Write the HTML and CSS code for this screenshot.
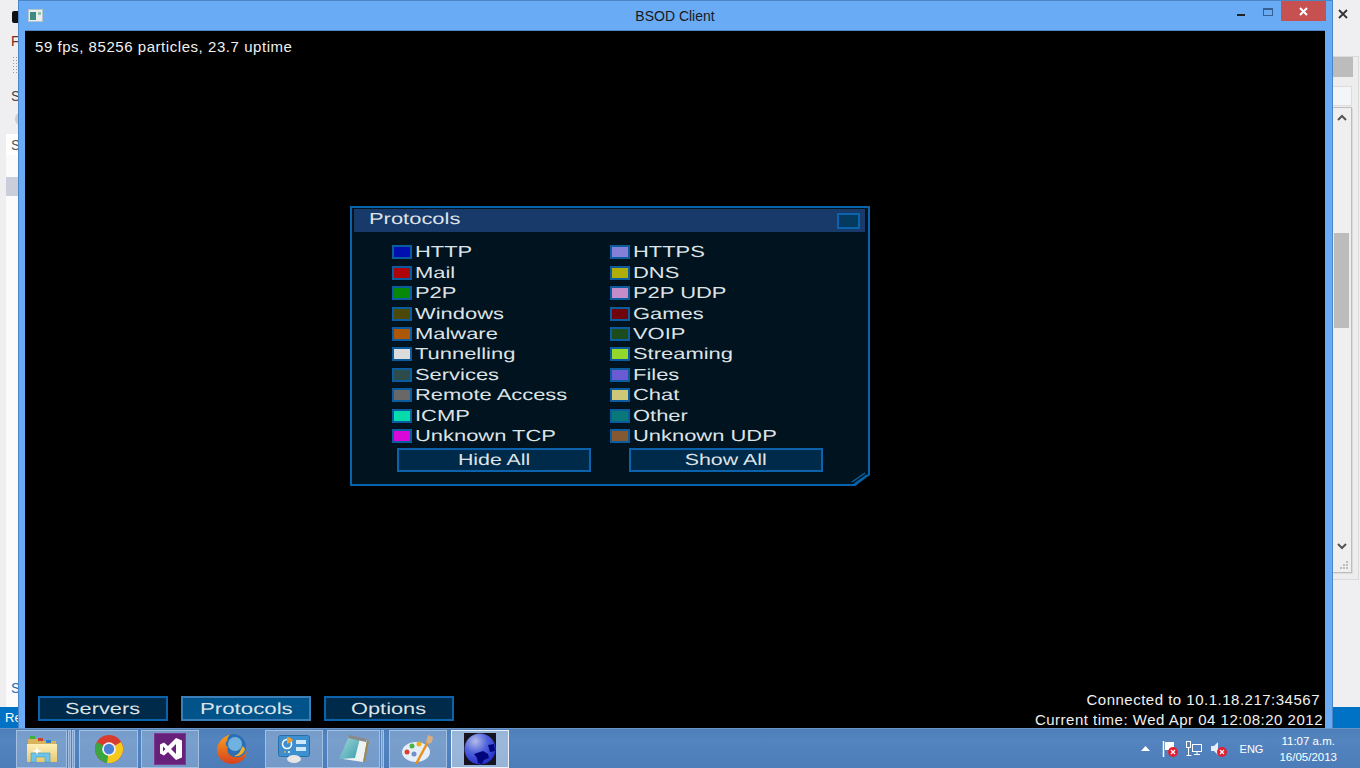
FILE: index.html
```html
<!DOCTYPE html>
<html lang="en">
<head>
<meta charset="utf-8">
<title>BSOD Client</title>
<link rel="stylesheet" href="styles.css">
</head>
<body>
<div class="desktop">
  <div class="backwin">
    <div class="bg-list"></div>
    <div class="bg-bold"></div>
    <span class="bg-frag f1">F</span>
    <div class="bg-dots"></div>
    <span class="bg-frag f2">S</span>
    <div class="bg-round"></div>
    <div class="bg-input"><span>S</span></div>
    <div class="bg-sel"></div>
    <span class="bg-frag f3">S</span>
    <div class="bg-status">Re</div>
    <svg class="bg-close" width="12" height="12" viewBox="0 0 12 12"><path d="M2 2l8 8M10 2l-8 8" stroke="#333" stroke-width="1.8"/></svg>
    <div class="bg-side"></div>
    <div class="bg-tab"></div>
    <div class="bg-field"></div>
    <div class="bg-scroll">
      <svg class="sc-up" width="10" height="8" viewBox="0 0 10 8"><path d="M1 6l4-4 4 4" fill="none" stroke="#555" stroke-width="2"/></svg>
      <div class="sc-thumb"></div>
      <svg class="sc-down" width="10" height="8" viewBox="0 0 10 8"><path d="M1 2l4 4 4-4" fill="none" stroke="#555" stroke-width="2"/></svg>
      <svg class="sc-grip" width="9" height="9" viewBox="0 0 9 9"><path d="M6 0h2v2H6zM3 3h2v2H3zM6 3h2v2H6zM0 6h2v2H0zM3 6h2v2H3zM6 6h2v2H6z" fill="#bbb"/></svg>
    </div>
  </div>

  <div class="window">
    <div class="titlebar">
      <svg class="appicon" width="15" height="13" viewBox="0 0 15 13"><rect x=".5" y=".5" width="14" height="12" fill="#e8eef0" stroke="#b8c4cc"/><rect x="2" y="3" width="6" height="8" fill="#3f8a80"/><rect x="10" y="3" width="3" height="3" fill="#8fc7a8"/></svg>
      <span class="title">BSOD Client</span>
      <div class="caption">
        <span class="cap-min"></span>
        <span class="cap-max"></span>
        <span class="cap-close"><svg width="9" height="9" viewBox="0 0 9 9"><path d="M1 1l7 7M8 1L1 8" stroke="#fff" stroke-width="2"/></svg></span>
      </div>
    </div>
    <div class="viewport">
      <div class="fps">59 fps, 85256 particles, 23.7 uptime</div>

      <div class="panel">
        <div class="panel-head">
          <span class="wide panel-title">Protocols</span>
          <span class="panel-toggle"></span>
        </div>
        <div class="proto-grid">
          <div class="proto"><i class="sw" style="background:#0010b0"></i><span class="wide">HTTP</span></div>
          <div class="proto"><i class="sw" style="background:#8480d8"></i><span class="wide">HTTPS</span></div>
          <div class="proto"><i class="sw" style="background:#ac0408"></i><span class="wide">Mail</span></div>
          <div class="proto"><i class="sw" style="background:#b0ac08"></i><span class="wide">DNS</span></div>
          <div class="proto"><i class="sw" style="background:#088808"></i><span class="wide">P2P</span></div>
          <div class="proto"><i class="sw" style="background:#c48cc8"></i><span class="wide">P2P UDP</span></div>
          <div class="proto"><i class="sw" style="background:#4c4808"></i><span class="wide">Windows</span></div>
          <div class="proto"><i class="sw" style="background:#70040c"></i><span class="wide">Games</span></div>
          <div class="proto"><i class="sw" style="background:#ac5808"></i><span class="wide">Malware</span></div>
          <div class="proto"><i class="sw" style="background:#1c4c1c"></i><span class="wide">VOIP</span></div>
          <div class="proto"><i class="sw" style="background:#dcdcdc"></i><span class="wide">Tunnelling</span></div>
          <div class="proto"><i class="sw" style="background:#94d82c"></i><span class="wide">Streaming</span></div>
          <div class="proto"><i class="sw" style="background:#2c4c4c"></i><span class="wide">Services</span></div>
          <div class="proto"><i class="sw" style="background:#6a5ad4"></i><span class="wide">Files</span></div>
          <div class="proto"><i class="sw" style="background:#686868"></i><span class="wide">Remote Access</span></div>
          <div class="proto"><i class="sw" style="background:#ccc878"></i><span class="wide">Chat</span></div>
          <div class="proto"><i class="sw" style="background:#04dcac"></i><span class="wide">ICMP</span></div>
          <div class="proto"><i class="sw" style="background:#087878"></i><span class="wide">Other</span></div>
          <div class="proto"><i class="sw" style="background:#d808d8"></i><span class="wide">Unknown TCP</span></div>
          <div class="proto"><i class="sw" style="background:#845830"></i><span class="wide">Unknown UDP</span></div>
        </div>
        <div class="panel-actions">
          <div class="gl-btn"><span class="wide">Hide All</span></div>
          <div class="gl-btn"><span class="wide">Show All</span></div>
        </div>
        <svg class="grip" width="20" height="16" viewBox="0 0 20 16"><path d="M20 5L5 16H20Z" fill="#000"/><path d="M19 4.500L5 15" fill="none" stroke="#0764ab" stroke-width="1.600"/><path d="M2 12L15 3M4 14L17 5" fill="none" stroke="#0764ab" stroke-width="1.400"/></svg>
      </div>

      <div class="bottom">
        <div class="nav">
          <div class="nav-btn"><span class="wide">Servers</span></div>
          <div class="nav-btn active"><span class="wide">Protocols</span></div>
          <div class="nav-btn"><span class="wide">Options</span></div>
        </div>
        <div class="status">
          <div>Connected to 10.1.18.217:34567</div>
          <div>Current time: Wed Apr 04 12:08:20 2012</div>
        </div>
      </div>
    </div>
  </div>

  <div class="taskbar">
    <div class="tb-items">
      <div class="tb-btn w51"><svg width="32" height="28" viewBox="0 0 32 28"><defs><linearGradient id="fo" x1="0" y1="0" x2="0" y2="1"><stop offset="0" stop-color="#fdf0b8"/><stop offset="1" stop-color="#e8c670"/></linearGradient></defs><path d="M2 4h12l2 2h14v20H2z" fill="#d8b45c"/><rect x="4" y="1" width="5" height="3" fill="#3cb043"/><rect x="12" y="3" width="5" height="3" fill="#d04030"/><rect x="20" y="5" width="5" height="3" fill="#3080d0"/><path d="M1 9h30v18H1z" fill="url(#fo)"/><path d="M5 18h19v9h-5v-5H10v5H5z" fill="#6cc4e8" stroke="#3d9cc8" stroke-width=".6"/><path d="M11 11l1 4 4 1-4 1-1 3-1-3-4-1 4-1z" fill="#fff"/></svg></div>
      <div class="tb-sliver"></div>
      <div class="tb-sliver"></div>
      <div class="tb-btn w59 ml4"><svg width="28" height="28" viewBox="0 0 28 28"><circle cx="14" cy="14" r="14" fill="#d93b2f"/><path d="M14 14L2 7A14 14 0 0 0 12 27.900Z" fill="#3ba53f"/><path d="M14 14L26 7A14 14 0 0 1 12 27.900Z" fill="#f6c91d"/><circle cx="14" cy="14" r="6.800" fill="#f4f4f4"/><circle cx="14" cy="14" r="5.200" fill="#4a80d6"/></svg></div>
      <div class="tb-btn w58 ml3"><svg width="32" height="32" viewBox="0 0 32 32"><rect width="32" height="32" fill="#68217a"/><rect x=".5" y=".5" width="31" height="31" fill="none" stroke="#7d3a90"/><path d="M22 5l6 2.500v17L22 27l-8-8-4 3.500-4-2V11.500l4-2 4 3.500zM22 11l-5 5 5 5zM9 13.500v5l2.500-2.500z" fill="#fff" fill-rule="evenodd"/></svg></div>
      <div class="tb-plain"><svg width="32" height="32" viewBox="0 0 32 32"><defs><linearGradient id="ff" x1="0" y1="0" x2="0" y2="1"><stop offset="0" stop-color="#f6a21e"/><stop offset="1" stop-color="#d8401c"/></linearGradient></defs><circle cx="17" cy="14" r="13" fill="#2a6fb5"/><circle cx="19" cy="11" r="7" fill="#6fb2e0"/><path d="M15 1C8 3 1 9 1 17c0 8 7 14 15 14 8 0 14-5 15-13-3 5-8 7-13 6-5-1-8-6-6-10-3-1-3-5 0-7-2 0 1-5 3-6z" fill="url(#ff)"/><path d="M29 16c-1 5-6 8-11 7 3-1 6-3 7-7l2-3z" fill="#f2b02a"/></svg></div>
      <div class="tb-btn w58"><svg width="32" height="28" viewBox="0 0 32 28"><rect x=".5" y=".5" width="31" height="21" rx="2" fill="#3d8fd0" stroke="#2a6ea8"/><circle cx="9" cy="9" r="4.500" fill="none" stroke="#fff" stroke-width="1.500"/><path d="M9 9V2a7 7 0 0 1 6 4z" fill="#f0a030"/><rect x="18" y="5" width="10" height="4" fill="#cfe8f8"/><rect x="18" y="12" width="10" height="4" fill="#cfe8f8"/><circle cx="7" cy="17" r="1" fill="#f0a030"/><circle cx="11" cy="17" r="1" fill="#fff"/><ellipse cx="16" cy="24" rx="7" ry="4" fill="#e6e6e6"/></svg></div>
      <div class="tb-btn w53 ml4"><svg width="32" height="30" viewBox="0 0 32 30"><defs><linearGradient id="np" x1="0" y1="0" x2="1" y2="1"><stop offset="0" stop-color="#a8dcd8"/><stop offset="1" stop-color="#3a9cb0"/></linearGradient></defs><path d="M11 2l18 4-4 22-20-3z" fill="#eef2f2"/><path d="M29 6l2 1-4 21-2 0z" fill="#a08a50"/><path d="M11 2L1 25l16-1 5-20z" fill="url(#np)"/><path d="M11 1l18 4-1 3-18-4z" fill="#8a8a8a"/></svg></div>
      <div class="tb-sliver"></div>
      <div class="tb-btn w58 ml5"><svg width="32" height="30" viewBox="0 0 32 30"><ellipse cx="14" cy="18" rx="14" ry="10" fill="#e6eef8"/><circle cx="5" cy="18" r="2.500" fill="#d84030"/><circle cx="10" cy="12" r="2.500" fill="#50b048"/><circle cx="17" cy="10" r="2.500" fill="#f0b020"/><circle cx="12" cy="20" r="2.500" fill="#7090c8"/><path d="M27 6L14 30" stroke="#e89020" stroke-width="2.500"/><path d="M24 8l2-7 5 2-1 5-3 2z" fill="#d8b080"/></svg></div>
      <div class="tb-btn w58 ml4 current"><div class="globe-bg"><svg width="32" height="32" viewBox="0 0 32 32"><defs><radialGradient id="gl" cx=".35" cy=".25" r=".85"><stop offset="0" stop-color="#b4bce8"/><stop offset=".45" stop-color="#4f62dc"/><stop offset="1" stop-color="#1a26c8"/></radialGradient></defs><circle cx="16" cy="16" r="15.500" fill="url(#gl)"/><path d="M10 21l9-3 5 3 1 4-5 2-2 4-4-1-1-5zM24 12l6-1 1 7-5 1z" fill="#00067a"/></svg></div></div>
    </div>
    <div class="tray">
      <svg class="tray-up" width="9" height="5" viewBox="0 0 9 5"><path d="M0 5L4.500 0 9 5z" fill="#fff"/></svg>
      <svg class="tray-flag" width="16" height="16" viewBox="0 0 16 16"><path d="M1.500 0v16" stroke="#fff" stroke-width="1.500"/><path d="M3 1h9v8H3z" fill="#fff"/><circle cx="11" cy="11" r="5" fill="#e02030"/><path d="M9 9l4 4M13 9l-4 4" stroke="#fff" stroke-width="1.200"/></svg>
      <svg class="tray-net" width="16" height="16" viewBox="0 0 16 16"><rect x="6.500" y="3.500" width="9" height="7" fill="none" stroke="#fff"/><rect x=".500" y=".500" width="4" height="6" fill="none" stroke="#fff"/><path d="M2.500 7v8M.500 14.500h5M8 13.500h6M11 11v2" stroke="#fff"/></svg>
      <svg class="tray-vol" width="16" height="16" viewBox="0 0 16 16"><path d="M0 5h3l4-4v13l-4-4H0z" fill="#e8eef8"/><circle cx="11" cy="11" r="5" fill="#e02030"/><path d="M9 9l4 4M13 9l-4 4" stroke="#fff" stroke-width="1.200"/></svg>
      <span class="lang">ENG</span>
      <div class="clock"><div>11:07 a.m.</div><div>16/05/2013</div></div>
    </div>
  </div>
</div>
</body>
</html>
```

FILE: styles.css
```css
* { box-sizing: border-box; }
html, body { margin: 0; height: 100%; overflow: hidden; }
.desktop {
  position: relative;
  width: 1360px;
  height: 768px;
  background: #efeff1;
  font-family: "Liberation Sans", Arial, sans-serif;
  overflow: hidden;
}

/* window lying behind the client */
.backwin { position: absolute; inset: 0 0 40px 0; background: #efeff2; }
.bg-list { position: absolute; left: 6px; top: 155px; width: 1300px; bottom: 21px; background: #fbfbfb; }
.bg-frag { position: absolute; left: 11px; font-size: 14px; line-height: 16px; color: #444; }
.f1 { top: 33px; color: #7a2a20; }
.f2 { top: 88px; }
.f3 { top: 680px; color: #1b6fb8; }
.bg-bold { position: absolute; left: 12px; top: 11px; width: 6px; height: 12px; background: #111; border-radius: 2px 0 0 2px; }
.bg-dots { position: absolute; left: 12px; top: 56px; width: 6px; height: 17px; background: radial-gradient(#999 35%, transparent 40%) 0 0 / 3px 3px; }
.bg-round { position: absolute; left: 15px; top: 113px; width: 10px; height: 12px; border-radius: 50%; background: #ccc; }
.bg-input { position: absolute; left: 6px; top: 134px; width: 1300px; height: 21px; background: #fff; font-size: 14px; line-height: 16px; color: #555; padding: 3px 0 0 5px; }
.bg-sel { position: absolute; left: 6px; top: 177px; width: 1300px; height: 19px; background: #cacdda; }
.bg-status { position: absolute; left: 0; top: 707px; width: 100%; height: 21px; background: #0072c6; color: #fff; font-size: 13px; line-height: 16px; padding: 3px 0 0 5px; }
.bg-close { position: absolute; left: 1337px; top: 8px; }
.bg-side { position: absolute; left: 1200px; top: 56px; width: 159px; height: 524px; background: #ededed; border: 1px solid #dadada; }
.bg-tab { position: absolute; left: 1333px; top: 57px; width: 20px; height: 20px; background: #bcbcbc; }
.bg-field { position: absolute; left: 1333px; top: 86px; width: 19px; height: 20px; background: #f4f5f8; border: 1px solid #dcdcdc; border-left: 0; }
.bg-scroll { position: absolute; left: 1333px; top: 107px; width: 19px; height: 466px; background: #efefef; border: 1px solid #bdbdbd; border-left: 0; box-shadow: 1px 1px 0 #dcdcdc; }
.sc-up { position: absolute; left: 4px; top: 6px; }
.sc-thumb { position: absolute; left: 1px; top: 125px; width: 15px; height: 95px; background: #bcbcbc; }
.sc-down { position: absolute; left: 4px; top: 434px; }
.sc-grip { position: absolute; right: 2px; bottom: 2px; }

/* the client window */
.window {
  position: absolute;
  left: 18px;
  top: 0;
  width: 1315px;
  height: 728px;
  background: #69abf5;
  border: 1px solid #4c86c6;
  border-bottom: 0;
  display: flex;
  flex-direction: column;
  padding: 0 7px 0 6px;
}
.titlebar { height: 29px; display: flex; align-items: center; position: relative; flex: none; }
.appicon { margin: 0 0 0 3px; }
.title { position: absolute; left: 0; right: 0; top: 7px; text-align: center; font-size: 14px; line-height: 16px; color: #1a1a1a; }
.caption { position: absolute; right: 0; top: 0; display: flex; align-items: flex-start; }
.cap-min { width: 8px; height: 2px; background: #222; margin: 13px 18px 0 0; }
.cap-max { width: 10px; height: 8px; border: 1px solid #35608f; border-top-width: 2px; margin: 7px 8px 0 0; }
.cap-close { width: 45px; height: 20px; margin-top: 0; background: #c75050; display: flex; align-items: center; justify-content: center; margin-right: -1px; }

.viewport {
  flex: 1;
  min-height: 0;
  background: #000;
  display: flex;
  flex-direction: column;
  justify-content: space-between;
  position: relative;
  border-top: 1px solid #4c86c6;
}
.fps { color: #f0f0f0; font-size: 15px; line-height: 18px; padding: 7px 0 0 10px; letter-spacing: .55px; }

/* stretched GUI font */
.wide {
  display: inline-block;
  font-size: 16px;
  line-height: 20px;
  padding-top: 2px;
  white-space: nowrap;
  color: #dfe3e6;
  text-rendering: geometricPrecision;
  transform: scaleX(1.37);
  transform-origin: left center;
}

.panel {
  position: absolute;
  left: 325px;
  top: 175px;
  width: 520px;
  height: 280px;
  background: #00131f;
  border: 2px solid #0764ab;
  padding: 1px 3px 1px 2px;
}
.panel-head { height: 23px; background: #173a6b; display: flex; align-items: center; justify-content: space-between; padding: 0 5px 0 15px; }
.panel-title { line-height: 18px; margin-bottom: 4px; }
.panel-toggle { width: 23px; height: 16px; background: #033a5e; border: 2px solid #0b63ad; }
.proto-grid {
  display: grid;
  grid-template-columns: 218px 218px;
  grid-auto-rows: 20.45px;
  margin: 10px 0 0 38px;
}
.proto { display: flex; align-items: center; gap: 3px; }
.sw { display: block; flex: none; width: 20px; height: 14px; border: 2px solid #0b5c9e; }
.panel-actions { display: flex; gap: 38px; margin: 2px 0 0 43px; }
.gl-btn {
  width: 194px;
  height: 24px;
  background: #002a4a;
  border: 2px solid #0b63ad;
  display: flex;
  align-items: center;
  justify-content: center;
}
.gl-btn .wide { transform-origin: center; transform: scaleX(1.335); }
.grip { position: absolute; right: -2px; bottom: -2px; }

.bottom { display: flex; justify-content: space-between; align-items: flex-end; }
.nav { display: flex; gap: 13px; margin: 0 0 7px 13px; }
.nav-btn {
  width: 130px;
  height: 25px;
  background: #002a4a;
  border: 2px solid #0b63ad;
  display: flex;
  align-items: center;
  justify-content: center;
}
.nav-btn .wide { transform-origin: center; transform: scaleX(1.36); }
.nav-btn.active { background: #02538a; border-color: #3a7fb8; }
.nav-btn.active .wide { transform: scaleX(1.39); }
.status { color: #f0f0f0; font-size: 15px; line-height: 20px; text-align: right; letter-spacing: .5px; padding: 0 2px 0 0; margin-bottom: -2px; }
.status div:first-child { padding-right: 3px; }

/* taskbar */
.taskbar {
  position: absolute;
  left: 0;
  right: 0;
  bottom: 0;
  height: 40px;
  background: linear-gradient(#4f7fb8, #5484bf 30%, #4c7db9);
  display: flex;
  justify-content: space-between;
  border-top: 1px solid #6a94c6;
}
.tb-items { display: flex; align-items: center; padding-left: 16px; }
.tb-btn, .tb-sliver {
  height: 38px;
  border: 1px solid rgba(200, 220, 245, .55);
  background: rgba(255, 255, 255, .22);
  display: flex;
  align-items: center;
  justify-content: center;
  flex: none;
}
.tb-sliver { width: 3px; margin-left: 1px; }
.w51 { width: 51px; }
.w53 { width: 53px; }
.w58 { width: 58px; }
.w59 { width: 59px; }
.ml3 { margin-left: 3px; }
.ml4 { margin-left: 4px; }
.ml5 { margin-left: 5px; }
.tb-plain { width: 66px; display: flex; justify-content: center; flex: none; }
.tb-btn.current { background: rgba(255, 255, 255, .42); border-color: #e8f0fa; }
.globe-bg { width: 32px; height: 32px; background: #15131f; }
.tray { display: flex; align-items: center; padding-right: 23px; color: #fff; font-size: 11.500px; }
.tray-up { margin-right: 12px; }
.tray-flag { margin-right: 8px; }
.tray-net { margin-right: 9px; }
.tray-vol { margin-right: 13px; }
.lang { font-size: 11px; margin-right: 16px; }
.clock { text-align: center; line-height: 16px; }
```
